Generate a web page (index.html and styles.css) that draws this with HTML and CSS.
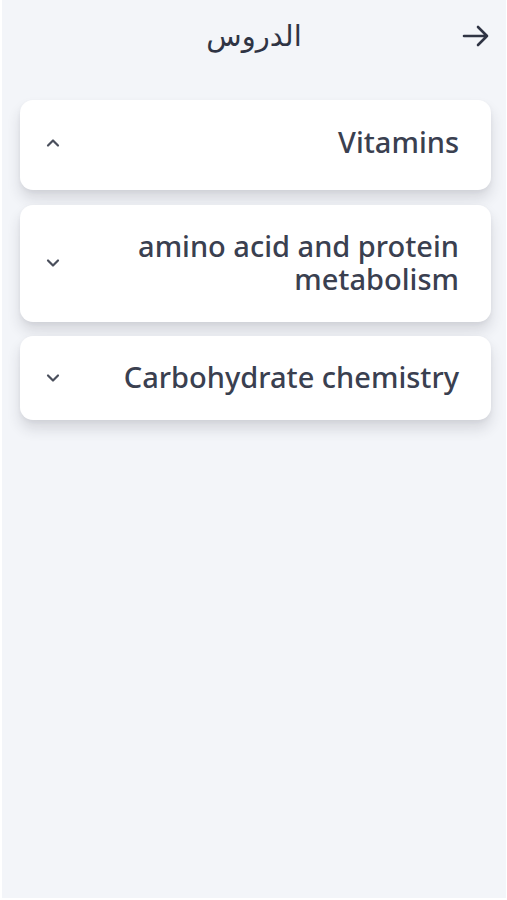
FILE: index.html
```html
<!DOCTYPE html>
<html lang="ar">
<head>
<meta charset="utf-8">
<link rel="stylesheet" href="styles.css">
</head>
<body>
<div class="frame">
  <header class="topbar">
    <span class="spacer"></span>
    <h1 class="title">الدروس</h1>
    <button class="back" aria-label="back">
      <svg width="28" height="22" viewBox="0 0 28 22"><path d="M2 11H25M16 2l9 9-9 9" fill="none" stroke="#2f3444" stroke-width="2.6" stroke-linecap="round" stroke-linejoin="round"/></svg>
    </button>
  </header>
  <main class="list">
    <div class="card open">
      <svg class="chev" width="16" height="10" viewBox="0 0 16 10"><path d="M3 7.5l5-5 5 5" fill="none" stroke="#4a4f5c" stroke-width="2.2" stroke-linecap="round" stroke-linejoin="round"/></svg>
      <span class="label">Vitamins</span>
    </div>
    <div class="card">
      <svg class="chev" width="16" height="10" viewBox="0 0 16 10"><path d="M3 2.5l5 5 5-5" fill="none" stroke="#4a4f5c" stroke-width="2.2" stroke-linecap="round" stroke-linejoin="round"/></svg>
      <span class="label">amino acid and protein metabolism</span>
    </div>
    <div class="card">
      <svg class="chev" width="16" height="10" viewBox="0 0 16 10"><path d="M3 2.5l5 5 5-5" fill="none" stroke="#4a4f5c" stroke-width="2.2" stroke-linecap="round" stroke-linejoin="round"/></svg>
      <span class="label">Carbohydrate chemistry</span>
    </div>
  </main>
</div>
</body>
</html>
```

FILE: styles.css
```css
html, body {
  margin: 0;
  padding: 0;
  background: #ffffff;
}
.frame {
  box-sizing: border-box;
  height: 900px;
  margin: 0 1px 0 2px;
  border-bottom: 2px solid #ffffff;
  background: #f3f5f9;
  font-family: "Noto Sans", "DejaVu Sans", sans-serif;
}
.topbar {
  height: 78px;
  display: grid;
  grid-template-columns: 1fr auto 1fr;
  align-items: center;
  padding: 0 16px 0 16px;
}
.title {
  margin: 0;
  font-family: "DejaVu Sans", sans-serif;
  font-weight: 400;
  font-size: 29px;
  color: #2f3444;
  line-height: 1;
  padding-bottom: 6px;
}
.back {
  justify-self: end;
  background: none;
  border: 0;
  padding: 0;
  display: flex;
  margin-top: -6px;
}
.list {
  padding: 22px 15px 0 18px;
  display: flex;
  flex-direction: column;
  gap: 14px;
}
.card {
  background: #ffffff;
  border-radius: 13px;
  display: flex;
  align-items: center;
  justify-content: space-between;
  padding: 24px 32px 27px 25px;
  box-shadow: 0 9px 14px rgba(40, 45, 60, 0.14), 0 2px 4px rgba(40, 45, 60, 0.05);
}
.card.open {
  padding-top: 25px;
  padding-bottom: 32px;
  margin-bottom: 1px;
}
.chev {
  flex: none;
  margin-top: 2px;
}
.label {
  text-align: right;
  font-size: 29px;
  font-weight: 500;
  line-height: 33px;
  color: #3a4050;
  max-width: 340px;
}
```
